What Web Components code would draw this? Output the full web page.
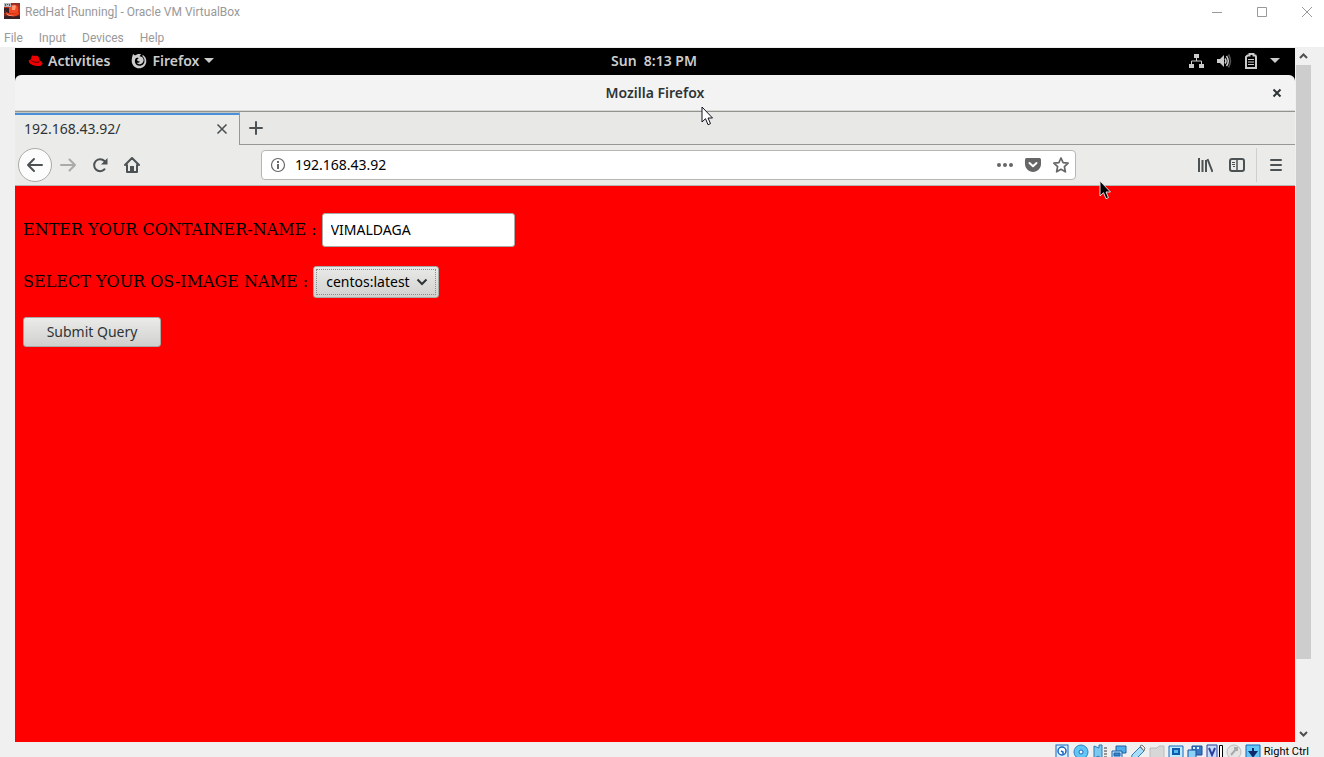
<!DOCTYPE html>
<html lang="en">
<head>
<meta charset="utf-8">
<title>RedHat [Running] - Oracle VM VirtualBox</title>
<style>
html, body { margin: 0; height: 100%; }
body { overflow: hidden; background: #f0f0f0; font-family: "Noto Sans", "Open Sans", sans-serif; }
</style>
</head>
<body>
<vm-window>
  <vm-titlebar slot="title">RedHat [Running] - Oracle VM VirtualBox</vm-titlebar>
  <vm-menubar slot="menu"></vm-menubar>
  <guest-screen slot="screen">
    <gnome-topbar></gnome-topbar>
    <firefox-window>
      <container-form></container-form>
    </firefox-window>
  </guest-screen>
  <vm-scrollbar slot="scroll"></vm-scrollbar>
  <vm-statusbar slot="status">Right Ctrl</vm-statusbar>
</vm-window>

<script>
const BASE = `
:host, *, *::before, *::after { box-sizing: border-box; }
svg { display: block; flex: none; }
button { display: flex; align-items: center; justify-content: center; margin: 0; padding: 0; border: 0; background: none; color: inherit; font: inherit; }
`;
function define(name, css, markup) {
  const template = document.createElement('template');
  template.innerHTML = `<style>${BASE}${css}</style>${markup}`;
  customElements.define(name, class extends HTMLElement {
    constructor() {
      super();
      this.attachShadow({ mode: 'open' }).append(template.content.cloneNode(true));
    }
  });
}

define('vm-window', `
:host { display: flex; flex-direction: column; height: 100vh; background: #f0f0f0; }
.work { display: flex; flex: 1; min-height: 0; padding: 1px 13px 0 15px; gap: 1px; }
`, `<slot name="title"></slot><slot name="menu"></slot>
<div class="work"><slot name="screen"></slot><slot name="scroll"></slot></div>
<slot name="status"></slot>`);

define('vm-titlebar', `
:host { display: flex; align-items: center; height: 23px; padding: 0 11px 0 4px; background: #fff; color: #999; font: 12px/18px Roboto, "Noto Sans", sans-serif; }
.name { flex: 1; padding-left: 5px; white-space: nowrap; }
.controls { display: flex; gap: 33px; }
`, `
<svg width="16" height="18" viewBox="0 0 16 18" aria-hidden="true">
  <defs><linearGradient id="g" x2="0" y2="1"><stop stop-color="#8a3024"/><stop offset=".5" stop-color="#d62a10"/><stop offset="1" stop-color="#292326"/></linearGradient></defs>
  <path fill="url(#g)" d="M0 0h16v16H0z"/>
  <path fill="#3a2226" d="M0 5h5v5H0zM0 13h16v3H0z"/>
  <path fill="#f24a24" d="M5 4c1-3 8-3 9 0v5c-2 2-8 2-9 0z"/>
  <path fill="#ff9a78" d="M8 3c1-1 4-1 4 0l-1 4H8z"/>
  <path fill="#f0401c" d="M1 8c3 3 9 4 14 1v2c-3 4-12 3-14-3z"/>
  <path fill="#ffb49a" d="M2 10c2 2 5 3 8 2-3 2-7 1-8-2z"/>
  <path fill="#b7b9bf" d="M0 0h7v4H0z"/><path fill="#555" d="M1 1h1v2H1zM3 1h1v1H3zM5 1h1v2H5z"/>
</svg>
<span class="name"><slot></slot></span>
<div class="controls">
  <button aria-label="Minimize"><svg width="12" height="12" stroke="#999"><path d="M1 6.500h10"/></svg></button>
  <button aria-label="Maximize"><svg width="12" height="12" stroke="#999" fill="none"><path d="M1.500 1.500h9v9h-9z"/></svg></button>
  <button aria-label="Close"><svg width="12" height="12" stroke="#999"><path d="M1 1l10 10M11 1L1 11"/></svg></button>
</div>`);

define('vm-menubar', `
:host { display: flex; align-items: center; gap: 16px; height: 24px; padding: 5px 4px 0; background: #fff; color: #999; font: 12px/18px Roboto, "Noto Sans", sans-serif; }
`, `<button>File</button><button>Input</button><button>Devices</button><button>Help</button>`);

define('guest-screen', `
:host { position: relative; display: flex; flex-direction: column; flex: 1; min-width: 0; background: #000; }
.pointer { position: absolute; }
.host { left: 686px; top: 58px; }
.guest { left: 1084px; top: 132px; }
`, `<slot></slot>
<svg class="pointer host" width="13" height="20" aria-hidden="true"><path d="M1 1v15l3.500-3.300 2.500 6 2.500-1.100L7 12h4.500z" fill="#fff" stroke="#10101c"/></svg>
<svg class="pointer guest" width="13" height="20" aria-hidden="true"><path d="M1 1v15l3.500-3.300 2.500 6 2.500-1.100L7 12h4.500z" fill="#000" stroke="#ddd"/></svg>`);

define('gnome-topbar', `
:host { display: grid; grid-template-columns: 1fr auto 1fr; align-items: center; height: 27px; padding: 0 15px 1px 13px; background: #000; color: #ccc; font: 600 14px/20px "Noto Sans", sans-serif; }
.left, .right { display: flex; align-items: center; }
.left { gap: 21px; }
.right { justify-content: flex-end; gap: 11px; }
.left button { gap: 5px; }
.clock { white-space: pre; }
`, `
<div class="left">
  <button><svg width="15" height="14" viewBox="0 0 16 14"><path fill="#e00" d="M4 1.500C5 .5 6.500 2 8 1.500c1.500-.5 3 0 3.500 1.500l1 3.500c2 .8 3 2 3 3.500-.3 2-3 2.800-6 2.300C5 12 .8 9.500.8 7.200.8 6 2 5.500 3.200 5.500z"/><path fill="none" stroke="#000" stroke-width=".7" d="M3.200 6c1.500 2 6 3.200 9 1.800"/></svg>Activities</button>
  <button><svg width="16" height="16" viewBox="0 0 16 16"><path fill="#ccc" d="M2 1l2 1.500C5.500 1.300 8 .6 10 1.300L8.500 3.200c3 .2 4.500 2.300 4 4.800-.5 2.500-3 3.800-5 3-1-.4-1.500-1-1.500-1.600 1 .6 2.500 0 2.800-1-2 0-3-.8-2.600-2l1.600-1.300C6 4.700 5.300 4.600 4.600 5.500 3 8 4 12.500 8.500 12.800c3.300 0 5-2.300 5-5 0-2-.7-3.500-2-4.600V1.700C14 3 15.500 5.500 15.300 8.500 15 12.500 12 15.300 8 15.300S.7 12 .7 8C.7 5.500 1.300 3.500 2 1z"/></svg>Firefox<svg width="10" height="6"><path fill="#ccc" d="M0 0h10L5 5z"/></svg></button>
</div>
<span class="clock">Sun  8:13 PM</span>
<div class="right">
  <svg width="16" height="16" aria-label="Network"><path fill="#ccc" d="M5 1h5v4H5zM0 11h5v4H0zM10 11h5v4h-5z"/><path fill="none" stroke="#ccc" d="M7.500 5v3M2.500 11V8h10v3"/></svg>
  <svg width="16" height="16" aria-label="Volume"><path fill="#ccc" d="M1 6h3l4-4v12L4 10H1z"/><path fill="none" stroke="#ccc" stroke-width="1.500" d="M9 5.500q2 2.500 0 5M10.500 3q3.500 5 0 10"/><path fill="none" stroke="#555" stroke-width="1.500" d="M12.500 1.500q4 6.500 0 13"/></svg>
  <svg width="16" height="16" aria-label="Battery"><path fill="none" stroke="#ccc" stroke-width="2" d="M4.500 2.500h2V1h4v1.500h2L13 4v11H3V4z"/><path stroke="#ccc" d="M5 6.500h6M5 9h6M5 11.500h6"/></svg>
  <svg width="10" height="6"><path fill="#ccc" d="M0 0h10L5 5z"/></svg>
</div>`);

define('firefox-window', `
:host { display: flex; flex-direction: column; flex: 1; min-height: 0; color: #2e3436; font: 14px/20px "Noto Sans", sans-serif; }
header { display: grid; grid-template-columns: 1fr auto 1fr; align-items: center; height: 37px; padding: 0 12px; border-bottom: 1px solid #92928e; border-radius: 6px 6px 0 0; background: #f3f3f3; box-shadow: inset 0 -1px #d8d8d5; }
h1 { grid-column: 2; margin: 0; font: 600 14px/20px "Noto Sans", sans-serif; }
header button { justify-self: end; }
.tabs { display: flex; height: 33px; background: #e8e8e7; }
.tab { display: flex; align-items: center; justify-content: space-between; width: 225px; padding: 0 11px 0 9px; border-right: 1px solid #979793; border-top: 1px solid #c5c5c1; background: #ebebe9; box-shadow: inset 0 2px #4a90d9; }
.rest { flex: 1; display: flex; padding-left: 8px; border-bottom: 1px solid #979793; }
.nav { display: flex; align-items: center; height: 41px; padding: 0 3px; background: #ebebe9; border-bottom: 1px solid #b6b6b2; }
.nav > button { width: 32px; height: 32px; }
.nav .back { width: 34px; height: 34px; border: 1px solid #aaaaa6; border-radius: 50%; background: #fcfcfc; }
.space { width: 113px; }
.url { display: flex; align-items: center; flex: 1; min-width: 0; height: 30px; padding: 0 6px 0 8px; gap: 12px; border: 1px solid #b6b6b2; border-radius: 4px; background: #fff; }
.url input { flex: 1; min-width: 0; height: 24px; margin-left: -3px; padding: 0 0 2px; border: 0; outline: 0; background: none; color: #000; font: inherit; }
.rule { width: 1px; height: 34px; margin: 0 3px; background: #cfcfcc; }
main { flex: 1; min-height: 0; }
`, `
<header><h1>Mozilla Firefox</h1><button aria-label="Close window"><svg width="12" height="12"><path stroke="#2e3436" stroke-width="2" d="M2.500 2.500l7 7M9.500 2.500l-7 7"/></svg></button></header>
<div class="tabs">
  <div class="tab"><span>192.168.43.92/</span><button aria-label="Close tab"><svg width="12" height="12"><path stroke="#4c5254" stroke-width="1.600" d="M1.500 1.500l9 9M10.500 1.500l-9 9"/></svg></button></div>
  <div class="rest"><button aria-label="New tab"><svg width="16" height="16"><path stroke="#4c5254" stroke-width="2" stroke-linecap="round" d="M8 2v12M2 8h12"/></svg></button></div>
</div>
<div class="nav">
  <button class="back" aria-label="Back"><svg width="18" height="18" fill="none" stroke="#4c5254" stroke-width="2" stroke-linecap="round" stroke-linejoin="round"><path d="M16 9H2M8 3L2 9l6 6"/></svg></button>
  <button aria-label="Forward" disabled><svg width="16" height="16" fill="none" stroke="#aaa" stroke-width="2" stroke-linecap="round" stroke-linejoin="round"><path d="M1 8h14M9.500 2.500L15 8l-5.500 5.500"/></svg></button>
  <button aria-label="Reload"><svg width="16" height="16" viewBox="0 0 16 16"><path fill="none" stroke="#4c5254" stroke-width="2" stroke-linecap="round" d="M12.500 12.300A6 6 0 1 1 12.500 4"/><path fill="#4c5254" d="M15.500 1v6.500H9z"/></svg></button>
  <button aria-label="Home"><svg width="16" height="16" viewBox="0 0 16 16"><path fill="none" stroke="#4c5254" stroke-width="2" stroke-linecap="round" stroke-linejoin="round" d="M1 8l7-7 7 7M3 8v7h10V8"/><path fill="#4c5254" d="M6 9h4v6H6z"/></svg></button>
  <div class="space"></div>
  <div class="url">
    <svg width="16" height="16"><circle cx="8" cy="8" r="6.500" fill="none" stroke="#666" stroke-width="1.200"/><path fill="#666" d="M7 4h2v2H7zM7 7h2v5H7z"/></svg>
    <input type="text" value="192.168.43.92" aria-label="Address">
    <button aria-label="Page actions"><svg width="16" height="16" fill="#666"><circle cx="2" cy="8" r="2"/><circle cx="8" cy="8" r="2"/><circle cx="14" cy="8" r="2"/></svg></button>
    <button aria-label="Save to Pocket"><svg width="16" height="16"><path fill="#666" d="M1.500 1h13q1.500 0 1.500 1.500V7c0 4-3.500 8-8 8S0 11 0 7V2.500Q0 1 1.500 1z"/><path fill="none" stroke="#fff" stroke-width="2" stroke-linecap="round" stroke-linejoin="round" d="M4.500 6L8 9.300 11.500 6"/></svg></button>
    <button aria-label="Bookmark"><svg width="16" height="16"><path fill="none" stroke="#666" stroke-width="1.700" stroke-linejoin="round" d="M8 1l2.100 4.600 5 .6-3.700 3.500 1 5.100L8 12.300l-4.400 2.500 1-5.100L.9 6.200l5-.6z"/></svg></button>
  </div>
  <div class="space"></div>
  <button aria-label="Library"><svg width="16" height="16"><path stroke="#4c5254" stroke-width="2" d="M2 1v14M5.500 3v12M9 3v12M10.500 2l5 13"/></svg></button>
  <button aria-label="Sidebars"><svg width="16" height="16" fill="none" stroke="#4c5254"><rect x="1" y="2" width="14" height="12" rx="2" stroke-width="2"/><path stroke-width="1.500" d="M8 2v12"/><path d="M3 5.500h3M3 7.500h3M4 9.500h2"/></svg></button>
  <span class="rule"></span>
  <button aria-label="Menu"><svg width="16" height="16"><path stroke="#4c5254" stroke-width="2" stroke-linecap="round" d="M3 3h10M3 8h10M3 13h10"/></svg></button>
</div>
<main><slot></slot></main>`);

define('container-form', `
:host { display: block; height: 100%; background: #f00; color: #000; font: 16px/20px "DejaVu Serif", serif; }
form { display: flex; flex-direction: column; align-items: flex-start; gap: 19px; padding: 27px 8px; }
.row { display: flex; align-items: center; gap: 5px; }
label { white-space: nowrap; }
input, select, .submit { border: 1px solid #a8aaa5; border-radius: 3px; font: 14px/20px "Noto Sans", sans-serif; }
input { width: 193px; height: 34px; margin: 0; padding: 0 8px 2px; background: #fff; color: #000; }
.pick { position: relative; display: flex; }
select { appearance: none; width: 126px; height: 32px; margin: 0; padding: 0 12px; background: linear-gradient(#e9e9e7, #d2d3d1); color: #000; outline: 1px dotted #8b8e8a; outline-offset: -4px; }
.pick svg { position: absolute; right: 11px; top: 10px; pointer-events: none; }
.submit { width: 138px; height: 30px; background: linear-gradient(#ebebe9, #d0d1cf); color: #2e3436; }
`, `
<form>
  <div class="row"><label for="name">ENTER YOUR CONTAINER-NAME :</label><input id="name" type="text" value="VIMALDAGA"></div>
  <div class="row"><label for="image">SELECT YOUR OS-IMAGE NAME :</label><span class="pick"><select id="image"><option>centos:latest</option></select><svg width="12" height="12"><path fill="none" stroke="#2e3436" stroke-width="2" d="M1.500 3.500L6 8l4.500-4.500"/></svg></span></div>
  <button class="submit" type="submit">Submit Query</button>
</form>`);

define('vm-scrollbar', `
:host { display: flex; flex-direction: column; align-items: flex-start; width: 15px; }
.up, .down { height: 17px; width: 15px; }
.track { flex: 1; width: 100%; }
.thumb { height: 90%; background: #cdcdcd; }
`, `
<button class="up" aria-label="Scroll up"><svg width="9" height="9" fill="none" stroke="#505050" stroke-width="2"><path d="M1 6l3.500-3.500L8 6"/></svg></button>
<div class="track"><div class="thumb"></div></div>
<button class="down" aria-label="Scroll down"><svg width="9" height="9" fill="none" stroke="#505050" stroke-width="2"><path d="M1 3l3.500 3.500L8 3"/></svg></button>`);

define('vm-statusbar', `
:host { display: flex; align-items: flex-end; justify-content: flex-end; gap: 3px; height: 15px; padding: 0 15px 0 0; color: #000; font: 11px/11px Roboto, "Noto Sans", sans-serif; white-space: nowrap; }
svg { height: 13px; }
`, `
<svg width="16" height="16"><rect x="2" y="1" width="12" height="14" fill="#d8efff" stroke="#1766c0"/><circle cx="8" cy="7" r="4" fill="#fff" stroke="#1766c0" stroke-width="1.500"/><path d="M7 7l2 1v2" fill="none" stroke="#1766c0" stroke-width="1.500"/></svg>
<svg width="16" height="16"><circle cx="8" cy="8" r="7" fill="#62c6f4" stroke="#2b83c8"/><circle cx="8" cy="8" r="2" fill="#fff" stroke="#1766c0"/></svg>
<svg width="16" height="16"><path d="M2 2l5 2V1h3v14H7v-3l-5 2z" fill="#7cc9f0" stroke="#2b78b8"/><path d="M12 4h3M12 7h3M12 10h3M12 13h3" stroke="#777" stroke-width="1.500"/></svg>
<svg width="16" height="16" stroke="#225ea8"><path d="M5 2h10v7H5z" fill="#4faee8"/><path d="M1 7h10v7H1z" fill="#b9e4fb"/><path d="M3 9h6v3H3z" fill="#2e86cd"/></svg>
<svg width="16" height="16"><path d="M2 11l8-8 4 4-8 8c-3 1-5-1-4-4z" fill="#a8dcf7" stroke="#317fba"/><path d="M10 2l2-1 3 3-1 3z" fill="#eee" stroke="#777"/></svg>
<svg width="16" height="16"><path d="M1 4h7l2-2h5v13H1z" fill="#d7d7d7" stroke="#bcbcbc"/></svg>
<svg width="16" height="16"><path d="M1 2h14v12H1z" fill="#bfeaff" stroke="#1766c0"/><path d="M5 5h6v5H5z" fill="#55b9ef" stroke="#0c5bad" stroke-width="2"/></svg>
<svg width="16" height="16"><path d="M5 2h10v9H5z" fill="#3778c5" stroke="#1b4d9b"/><path d="M1 6h8v8H1z" fill="#8ad3f7" stroke="#1b4d9b"/><path d="M6 3h2v2H6zM10 3h2v2h-2z" fill="#d8f2ff"/></svg>
<svg width="17" height="16"><path d="M1 1h10v14H1z" fill="#c8dcff" stroke="#2b3f9c"/><path d="M3 4l3 7 3-7" fill="none" stroke="#2b3f9c" stroke-width="2"/><path d="M13.500 1.500h3v14h-3z" fill="#fff" stroke="#000"/></svg>
<svg width="16" height="16"><circle cx="8" cy="8" r="7" fill="#e4e4e4" stroke="#bcbcbc"/><path d="M5 11l6-7M8 4l3 0v3" fill="none" stroke="#aaa" stroke-width="2"/></svg>
<svg width="16" height="16"><path d="M1 1h14v14H1z" fill="#65c7f3" stroke="#1766c0"/><path d="M8 4v5M5 8h6l-3 4z" fill="#102b6b" stroke="#102b6b" stroke-width="2"/></svg>
<span><slot></slot></span>`);
</script>
</body>
</html>
